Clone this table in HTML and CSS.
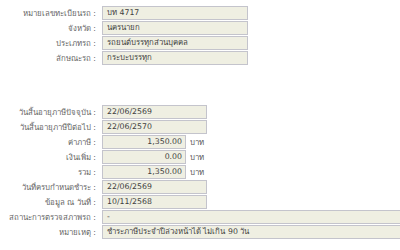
FILE: index.html
```html
<!DOCTYPE html>
<html lang="th">
<head>
<meta charset="utf-8">
<link rel="stylesheet" href="styles.css">
</head>
<body>
<div class="page">
  <div class="group">
    <div class="row"><div class="label">หมายเลขทะเบียนรถ :</div><div class="box w-wide">บท 4717</div></div>
    <div class="row"><div class="label">จังหวัด :</div><div class="box w-wide">นครนายก</div></div>
    <div class="row"><div class="label">ประเภทรถ :</div><div class="box w-wide">รถยนต์บรรทุกส่วนบุคคล</div></div>
    <div class="row"><div class="label">ลักษณะรถ :</div><div class="box w-wide">กระบะบรรทุก</div></div>
  </div>
  <div class="group second">
    <div class="row"><div class="label">วันสิ้นอายุภาษีปัจจุบัน :</div><div class="box w-date">22/06/2569</div></div>
    <div class="row"><div class="label">วันสิ้นอายุภาษีปีต่อไป :</div><div class="box w-date">22/06/2570</div></div>
    <div class="row"><div class="label">ค่าภาษี :</div><div class="box w-money">1,350.00</div><span class="unit">บาท</span></div>
    <div class="row"><div class="label">เงินเพิ่ม :</div><div class="box w-money">0.00</div><span class="unit">บาท</span></div>
    <div class="row"><div class="label">รวม :</div><div class="box w-money">1,350.00</div><span class="unit">บาท</span></div>
    <div class="row"><div class="label">วันที่ครบกำหนดชำระ :</div><div class="box w-date">22/06/2569</div></div>
    <div class="row"><div class="label">ข้อมูล ณ วันที่ :</div><div class="box w-date">10/11/2568</div></div>
    <div class="row"><div class="label">สถานะการตรวจสภาพรถ :</div><div class="box w-full">-</div></div>
    <div class="row"><div class="label">หมายเหตุ :</div><div class="box w-full">ชำระภาษีประจำปีล่วงหน้าได้ ไม่เกิน 90 วัน</div></div>
  </div>
</div>
</body>
</html>
```
FILE: styles.css
```css
html, body {
  margin: 0;
  padding: 0;
  background: #ffffff;
}
body {
  font-family: "DejaVu Sans", "Noto Sans", sans-serif;
  font-size: 7.8px;
  color: #555555;
}
.page {
  padding-top: 6px;
}
.group {
  display: flex;
  flex-direction: column;
  gap: 1px;
}
.group.second {
  margin-top: 40px;
}
.row {
  display: flex;
  align-items: center;
  height: 14px;
  white-space: nowrap;
}
.label {
  width: 99px;
  flex: none;
  text-align: right;
  padding-right: 3px;
  box-sizing: border-box;
  color: #666666;
}
.box {
  flex: none;
  box-sizing: border-box;
  height: 14px;
  line-height: 12px;
  margin-left: 3px;
  padding: 0 4px;
  border: 1px solid #c4c4cc;
  background: #efefe2;
  color: #3f3f3f;
  overflow: hidden;
}
.w-wide { width: 146px; }
.w-date { width: 105px; }
.w-money { width: 84px; text-align: right; padding-right: 3px; }
.w-full { flex: 1 1 auto; border-right: none; }
.unit {
  margin-left: 4px;
  color: #555555;
}
```
